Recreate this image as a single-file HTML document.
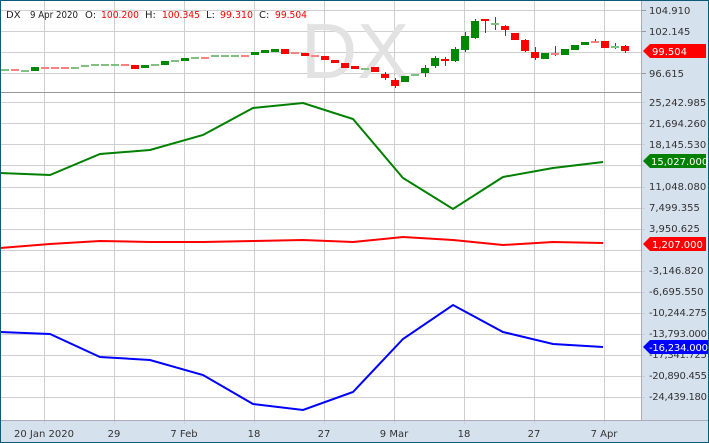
<!DOCTYPE html>
<html><head><meta charset="utf-8"><style>
html,body{margin:0;padding:0;width:709px;height:443px;overflow:hidden;background:#fff}
svg{display:block;font-family:"DejaVu Sans","Liberation Sans",sans-serif}
.ax{font-size:10px;fill:#333}
</style></head><body>
<svg width="709" height="443" viewBox="0 0 709 443">
<rect x="0" y="0" width="709" height="443" fill="#fff"/>
<rect x="641" y="0" width="68" height="443" fill="#d6e1ee"/>
<rect x="0" y="420" width="709" height="23" fill="#d6e1ee"/>
<g stroke="#cfcfcf" stroke-width="1">
<line x1="44.5" y1="0" x2="44.5" y2="424"/><line x1="114.5" y1="0" x2="114.5" y2="424"/><line x1="184.5" y1="0" x2="184.5" y2="424"/><line x1="254.5" y1="0" x2="254.5" y2="424"/><line x1="324.5" y1="0" x2="324.5" y2="424"/><line x1="394.5" y1="0" x2="394.5" y2="424"/><line x1="464.5" y1="0" x2="464.5" y2="424"/><line x1="534.5" y1="0" x2="534.5" y2="424"/><line x1="604.5" y1="0" x2="604.5" y2="424"/>
<line x1="0" y1="10.5" x2="645" y2="10.5"/><line x1="0" y1="31.5" x2="645" y2="31.5"/><line x1="0" y1="52.5" x2="645" y2="52.5"/><line x1="0" y1="73.5" x2="645" y2="73.5"/>
<line x1="0" y1="102.5" x2="645" y2="102.5"/><line x1="0" y1="123.5" x2="645" y2="123.5"/><line x1="0" y1="144.5" x2="645" y2="144.5"/><line x1="0" y1="165.5" x2="645" y2="165.5"/><line x1="0" y1="187.5" x2="645" y2="187.5"/><line x1="0" y1="208.5" x2="645" y2="208.5"/><line x1="0" y1="229.5" x2="645" y2="229.5"/><line x1="0" y1="250.5" x2="645" y2="250.5"/><line x1="0" y1="271.5" x2="645" y2="271.5"/><line x1="0" y1="292.5" x2="645" y2="292.5"/><line x1="0" y1="313.5" x2="645" y2="313.5"/><line x1="0" y1="334.5" x2="645" y2="334.5"/><line x1="0" y1="355.5" x2="645" y2="355.5"/><line x1="0" y1="376.5" x2="645" y2="376.5"/><line x1="0" y1="397.5" x2="645" y2="397.5"/>
</g>
<line x1="0" y1="92.5" x2="641" y2="92.5" stroke="#999"/>
<line x1="641.5" y1="0" x2="641.5" y2="420" stroke="#aab"/>
<line x1="0" y1="420.5" x2="709" y2="420.5" stroke="#aab"/>
<text x="355" y="78" font-size="78" fill="#e2e2e2" text-anchor="middle" font-family="Liberation Sans,sans-serif">DX</text>
<g font-size="10" fill="#222" lengthAdjust="spacingAndGlyphs">
<text x="6" y="18">DX</text><text x="30" y="18" textLength="48" lengthAdjust="spacingAndGlyphs">9 Apr 2020</text><text x="85" y="18">O:</text><text x="101" y="18" fill="#f00" textLength="38" lengthAdjust="spacingAndGlyphs">100.200</text><text x="145" y="18">H:</text><text x="162" y="18" fill="#f00" textLength="38" lengthAdjust="spacingAndGlyphs">100.345</text><text x="206" y="18">L:</text><text x="220" y="18" fill="#f00" textLength="33" lengthAdjust="spacingAndGlyphs">99.310</text><text x="259" y="18">C:</text><text x="275" y="18" fill="#f00" textLength="32" lengthAdjust="spacingAndGlyphs">99.504</text>
</g>
<g stroke="#444" stroke-width="1">
<line x1="385.5" y1="72" x2="385.5" y2="80"/><line x1="395.5" y1="78" x2="395.5" y2="88"/><line x1="425.5" y1="65" x2="425.5" y2="77"/><line x1="435.5" y1="56" x2="435.5" y2="68"/><line x1="445.5" y1="57" x2="445.5" y2="66"/><line x1="455.5" y1="47" x2="455.5" y2="62"/><line x1="465.5" y1="32" x2="465.5" y2="52"/><line x1="475.5" y1="19" x2="475.5" y2="39"/><line x1="485.5" y1="19" x2="485.5" y2="33"/><line x1="495.5" y1="17" x2="495.5" y2="30"/><line x1="505.5" y1="25" x2="505.5" y2="36"/><line x1="525.5" y1="39" x2="525.5" y2="52"/><line x1="535.5" y1="47" x2="535.5" y2="60"/><line x1="555.5" y1="46" x2="555.5" y2="56"/><line x1="595.5" y1="39" x2="595.5" y2="43"/><line x1="615.5" y1="43" x2="615.5" y2="49"/><line x1="625.5" y1="45" x2="625.5" y2="53"/>
</g>
<g>
<rect x="1" y="69" width="8" height="2" fill="#80c080"/><rect x="11" y="69" width="8" height="2" fill="#ff8080"/><rect x="21" y="70" width="8" height="2" fill="#80c080"/><rect x="31" y="67" width="8" height="4" fill="#080"/><rect x="41" y="67" width="8" height="2" fill="#ff8080"/><rect x="51" y="67" width="8" height="2" fill="#ff8080"/><rect x="61" y="67" width="8" height="2" fill="#ff8080"/><rect x="71" y="67" width="8" height="2" fill="#80c080"/><rect x="81" y="65" width="8" height="2" fill="#80c080"/><rect x="91" y="64" width="8" height="2" fill="#80c080"/><rect x="101" y="64" width="8" height="2" fill="#80c080"/><rect x="111" y="64" width="8" height="2" fill="#80c080"/><rect x="121" y="64" width="8" height="2" fill="#ff8080"/><rect x="131" y="65" width="8" height="4" fill="#f00"/><rect x="141" y="65" width="8" height="3" fill="#080"/><rect x="151" y="64" width="8" height="2" fill="#80c080"/><rect x="161" y="61" width="8" height="4" fill="#080"/><rect x="171" y="60" width="8" height="2" fill="#80c080"/><rect x="181" y="58" width="8" height="3" fill="#080"/><rect x="191" y="57" width="8" height="2" fill="#80c080"/><rect x="201" y="57" width="8" height="2" fill="#ff8080"/><rect x="211" y="55" width="8" height="2" fill="#80c080"/><rect x="221" y="55" width="8" height="2" fill="#80c080"/><rect x="231" y="55" width="8" height="2" fill="#80c080"/><rect x="241" y="55" width="8" height="2" fill="#ff8080"/><rect x="251" y="52" width="8" height="3" fill="#080"/><rect x="261" y="50" width="8" height="3" fill="#080"/><rect x="271" y="49" width="8" height="3" fill="#080"/><rect x="281" y="49" width="8" height="5" fill="#f00"/><rect x="291" y="52" width="8" height="2" fill="#ff8080"/><rect x="301" y="53" width="8" height="3" fill="#f00"/><rect x="311" y="55" width="8" height="2" fill="#ff8080"/><rect x="321" y="56" width="8" height="4" fill="#f00"/><rect x="331" y="60" width="8" height="3" fill="#f00"/><rect x="341" y="63" width="8" height="5" fill="#f00"/><rect x="351" y="66" width="8" height="3" fill="#f00"/><rect x="361" y="68" width="8" height="2" fill="#80c080"/><rect x="371" y="67" width="8" height="5" fill="#f00"/><rect x="381" y="74" width="8" height="4" fill="#f00"/><rect x="391" y="80" width="8" height="6" fill="#f00"/><rect x="401" y="76" width="8" height="6" fill="#080"/><rect x="411" y="74" width="8" height="2" fill="#80c080"/><rect x="421" y="68" width="8" height="5" fill="#080"/><rect x="431" y="58" width="8" height="8" fill="#080"/><rect x="441" y="59" width="8" height="2" fill="#f00"/><rect x="451" y="49" width="8" height="12" fill="#080"/><rect x="461" y="36" width="8" height="14" fill="#080"/><rect x="471" y="21" width="8" height="17" fill="#080"/><rect x="481" y="19" width="8" height="2" fill="#f00"/><rect x="491" y="23" width="8" height="2" fill="#80c080"/><rect x="501" y="26" width="8" height="4" fill="#f00"/><rect x="511" y="33" width="8" height="7" fill="#f00"/><rect x="521" y="40" width="8" height="11" fill="#f00"/><rect x="531" y="52" width="8" height="6" fill="#f00"/><rect x="541" y="53" width="8" height="6" fill="#080"/><rect x="551" y="53" width="8" height="2" fill="#ff8080"/><rect x="561" y="49" width="8" height="6" fill="#080"/><rect x="571" y="45" width="8" height="5" fill="#080"/><rect x="581" y="42" width="8" height="3" fill="#080"/><rect x="591" y="41" width="8" height="2" fill="#ff8080"/><rect x="601" y="41" width="8" height="7" fill="#f00"/><rect x="611" y="46" width="8" height="2" fill="#80c080"/><rect x="621" y="46" width="8" height="5" fill="#f00"/>
</g>
<g fill="none" stroke-width="2">
<polyline stroke="#008000" points="0,173 50,175 100,154 150,150 203,135 253,108 303,103 353,119 403,178 453,209 503,177 553,168 603,162"/>
<polyline stroke="#f00" points="0,248 50,244 100,241 150,242 203,242 253,241 303,240 353,242 403,237 453,240 503,245 553,242 603,243"/>
<polyline stroke="#00f" points="0,332 50,334 100,357 150,360 203,375 253,404 303,410 353,392 403,339 453,305 503,332 553,344 603,347"/>
</g>
<g class="ax">
<text x="649" y="14">104.910</text><text x="649" y="35">102.145</text><text x="649" y="77">96.615</text>
<text x="649" y="106">25,242.985</text><text x="649" y="127">21,694.260</text><text x="649" y="148">18,145.530</text><text x="649" y="190">11,048.080</text><text x="649" y="211">7,499.355</text><text x="649" y="232">3,950.625</text><text x="649" y="274">-3,146.820</text><text x="649" y="295">-6,695.550</text><text x="649" y="316" textLength="58">-10,244.275</text><text x="649" y="337" textLength="58">-13,793.000</text><text x="649" y="358" textLength="58">-17,341.725</text><text x="649" y="379" textLength="58">-20,890.455</text><text x="649" y="400" textLength="58">-24,439.180</text>
</g>
<g stroke="#999"><line x1="642" y1="10.5" x2="646" y2="10.5"/><line x1="642" y1="31.5" x2="646" y2="31.5"/><line x1="642" y1="73.5" x2="646" y2="73.5"/></g>
<polygon points="643,51 650,44 706,44 706,58 650,58" fill="#f00"/><text x="652" y="55" font-size="10" fill="#fff">99.504</text>
<polygon points="643,161 650,154 706,154 706,168 650,168" fill="#008000"/><text x="651" y="165" font-size="10" fill="#fff">15,027.000</text>
<polygon points="643,244 650,237 706,237 706,251 650,251" fill="#f00"/><text x="652" y="248" font-size="10" fill="#fff">1,207.000</text>
<polygon points="643,347 650,340 709,340 709,354 650,354" fill="#00f"/><text x="649" y="351" font-size="10" fill="#fff" textLength="59">-16,234.000</text>
<g class="ax" text-anchor="middle">
<text x="44" y="437">20 Jan 2020</text><text x="114" y="437">29</text><text x="184" y="437">7 Feb</text><text x="254" y="437">18</text><text x="324" y="437">27</text><text x="394" y="437">9 Mar</text><text x="464" y="437">18</text><text x="534" y="437">27</text><text x="604" y="437">7 Apr</text>
</g>
<rect x="0.5" y="0.5" width="708" height="442" fill="none" stroke="#0e5a78"/>
</svg>
</body></html>
